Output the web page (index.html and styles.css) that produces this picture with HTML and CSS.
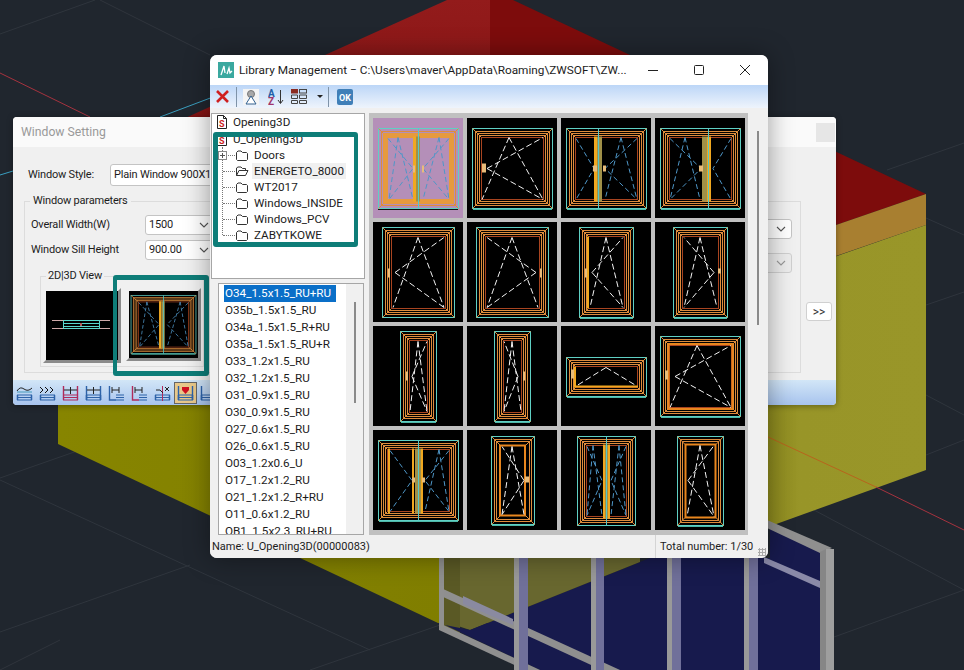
FILE: index.html
```html
<!DOCTYPE html>
<html lang="en">
<head>
<meta charset="utf-8">
<title>Library Management</title>
<link rel="stylesheet" href="styles.css">
</head>
<body>
<svg class="defs" aria-hidden="true">
  <defs>
    <g id="fA"><rect class="cy" x="5.5" y="10" width="80" height="80"/><path class="or" d="M8.5 13H82.5V87H8.5ZM10.5 15H80.5V85H10.5ZM12.5 17H78.5V83H12.5ZM5.5 10L14.5 19M85.5 10L76.5 19M5.5 90L14.5 81M85.5 90L76.5 81"/><rect class="rd" x="14.5" y="19" width="62" height="62"/><path class="cyb" d="M6 91H85"/></g>
    <g id="fB"><rect class="cy" x="9.5" y="5" width="72" height="90"/><path class="or" d="M12.5 8H78.5V92H12.5ZM14.5 10H76.5V90H14.5ZM16.5 12H74.5V88H16.5ZM9.5 5L18.5 14M81.5 5L72.5 14M9.5 95L18.5 86M81.5 95L72.5 86"/><rect class="rd" x="18.5" y="14" width="54" height="72"/></g>
    <g id="fC"><rect class="cy" x="18.5" y="5" width="54" height="90"/><path class="or" d="M21.5 8H69.5V92H21.5ZM23.5 10H67.5V90H23.5ZM25.5 12H65.5V88H25.5ZM18.5 5L27.5 14M72.5 5L63.5 14M18.5 95L27.5 86M72.5 95L63.5 86"/><rect class="rd" x="27.5" y="14" width="36" height="72"/><path class="cyb" d="M19 96H72"/></g>
    <g id="fD"><rect class="cy" x="27.5" y="5" width="36" height="90"/><path class="or" d="M30.5 8H60.5V92H30.5ZM32.5 10H58.5V90H32.5ZM34.5 12H56.5V88H34.5ZM27.5 5L36.5 14M63.5 5L54.5 14M27.5 95L36.5 86M63.5 95L54.5 86"/><rect class="rd" x="36.5" y="14" width="18" height="72"/><path class="cyb" d="M28 96H63"/></g>
    <g id="fE"><rect class="cy" x="5.5" y="31" width="80" height="39"/><path class="or" d="M8.5 34H82.5V67H8.5ZM10.5 36H80.5V65H10.5ZM12.5 38H78.5V63H12.5ZM5.5 31L14.5 40M85.5 31L76.5 40M5.5 70L14.5 61M85.5 70L76.5 61"/><rect class="rd" x="14.5" y="40" width="62" height="21"/><path class="cyb" d="M6 71H85"/></g>
    <g id="fF"><rect class="cy" x="24.5" y="6" width="43" height="88"/><path class="or" d="M27.5 9H64.5V91H27.5ZM29.5 11H62.5V89H29.5ZM24.5 6L33.5 15M67.5 6L58.5 15M24.5 94L33.5 85M67.5 94L58.5 85"/><rect class="ot" x="33" y="15" width="25" height="70"/><path class="cyb" d="M25 95H67"/></g>
    <g id="fG"><rect class="cy" x="16.5" y="6" width="58" height="89"/><path class="or" d="M19.5 9H71.5V92H19.5ZM21.5 11H69.5V90H21.5ZM23.5 13H67.5V88H23.5ZM16.5 6L25.5 15M74.5 6L65.5 15M16.5 95L25.5 86M74.5 95L65.5 86"/><rect class="rd" x="25.5" y="15" width="40" height="71"/></g>
    <g id="fH"><rect class="cy" x="22.5" y="6" width="46" height="89"/><path class="or" d="M25.5 9H65.5V92H25.5ZM27.5 11H63.5V90H27.5ZM22.5 6L30 14M68.5 6L61 14M22.5 95L30 87M68.5 95L61 87"/><rect class="ot" x="30.5" y="14" width="30" height="73"/><path class="cyb" d="M23 96H68"/></g>
    <g id="art1"><use href="#fA"/><rect class="band" x="12.5" y="17" width="66" height="66"/><rect class="amber" x="40" y="18" width="3" height="65"/><rect class="olive" x="43" y="18" width="4" height="65"/><path class="cyl" d="M45.500 10V90"/><path class="bl" d="M25 19L16 81M25 19L40 81M15 20L40 50L16 81M66 19L50 81M66 19L76 81M76 20L50 50L76 81"/><rect class="hd" x="40" y="47" width="2" height="7"/><rect class="hd" x="49" y="47" width="2" height="7"/></g>
    <symbol id="chev" viewBox="0 0 10 6"><path d="M1 1L5 5L9 1" fill="none" stroke="currentColor" stroke-width="1.100"/></symbol>
    <symbol id="folder" viewBox="0 0 14 12"><path d="M1.500 3.500L3 2H6L7.500 3.500H11.500L12.500 4.500V10.500L11.500 11.500H2.500L1.500 10.500Z" fill="#fff" stroke="#333" stroke-width="1"/></symbol>
    <symbol id="folderopen" viewBox="0 0 14 12"><path d="M1.500 10.500V3L3 2H6L7.500 3.500H10.500V5.500M1.500 10.500L4 5.500H13L10.500 10.500Z" fill="#fff" stroke="#333" stroke-width="1"/></symbol>
    <symbol id="doc" viewBox="0 0 12 14"><path d="M1.500 .5H7.500L10.500 3.500V13.500H1.500Z" fill="#fff" stroke="#222"/><path d="M7.500 .5V3.500H10.500" fill="none" stroke="#222"/><text x="3" y="12" class="doc-s">S</text></symbol>
    <symbol id="plan" viewBox="0 0 17 16"><path d="M1 10H16M1 12.500H16M1 15H16" stroke="#2d62a8" stroke-width="1.200" fill="none"/><path d="M1.500 10V15M15.500 10V15" stroke="#2d62a8" stroke-width="1.500"/></symbol>
  </defs>
</svg>

<main class="desktop">
  <svg class="scene" viewBox="0 0 964 670" aria-hidden="true">
    <defs>
      <linearGradient id="yl" x1="0" y1="0" x2="1" y2="0"><stop offset="0" stop-color="#878500"/><stop offset=".75" stop-color="#7f7d00"/><stop offset="1" stop-color="#6a6800"/></linearGradient>
      <linearGradient id="yr" x1="0" y1="0" x2="1" y2="0"><stop offset="0" stop-color="#8d8a1e"/><stop offset=".2" stop-color="#989528"/><stop offset="1" stop-color="#999629"/></linearGradient>
      <linearGradient id="rf" x1="0" y1="0" x2="0" y2="1"><stop offset="0" stop-color="#931b1b"/><stop offset="1" stop-color="#861414"/></linearGradient>
    </defs>
    <path class="grid" d="M0 34L95 0M100 0L210 55M0 478L80 450M0 480L370 650M310 670L440 625M0 632L190 565M887 170L964 143M926 218L964 235M926 305L964 292M926 395L964 415M926 455L964 440M814 510L964 590M834 637L964 590M0 670L60 640"/>
    <path class="red-line" d="M0 73L90 117"/>
    <path class="cyan-line" d="M0 175L13 171M160 117L213 97"/>
    <path fill="url(#yl)" d="M58 380V444L438 623L640 623V380Z"/>
    <path fill="url(#rf)" d="M183 119L447 0H490V120H183Z"/>
    <path fill="#7d0c0c" d="M490 0H513L926 194L836 225V260H490Z"/>
    <path fill="#a87f30" d="M836 225L926 194V225L836 256Z"/>
    <path fill="url(#yr)" d="M768 280L926 225V470L768 527Z"/>
    <path class="orange-line" d="M768 437L876 487"/>
    <path class="red-line" d="M876 487L964 530"/>
    <path fill="#68672f" d="M440 558H640V562L470 630L440 620Z"/>
    <path fill="#5a5925" d="M440 558H460V634L440 625Z"/>
    <path fill="#171a4d" d="M470 630L650 558H770V525L826 549V670H540L445 625Z"/>
    <g class="rails">
      <path fill="#8f8f8f" d="M767 520L832 548L820 553L767 528Z"/>
      <path fill="#8a8aa8" d="M764 557L820 581V588L764 563Z"/>
      <path fill="#8f8f8f" d="M441 588L620 670H602L441 596Z"/>
      <path fill="#8a8aa0" d="M463 596L513 619V625L463 604Z"/>
      <path fill="#8f8f8f" d="M439 623L540 670H525L439 630Z"/>
      <path fill="#909090" d="M439 558H444V627H439Z"/>
      <path fill="#999" d="M514 558H519V670H514Z"/>
      <path fill="#70709a" d="M519 558H528V670H519Z"/>
      <path fill="#999" d="M591 558H596V670H591Z"/>
      <path fill="#70709a" d="M596 558H604V670H596Z"/>
      <path fill="#999" d="M667 558H672V670H667Z"/>
      <path fill="#70709a" d="M672 558H681V670H672Z"/>
      <path fill="#999" d="M744 558H749V670H744Z"/>
      <path fill="#70709a" d="M749 558H758V670H749Z"/>
      <path fill="#868686" d="M820 552L826 549V670H820Z"/>
      <path fill="#9e9e9e" d="M826 549L834 549V670H826Z"/>
    </g>
  </svg>

  <section class="win ws">
    <header class="ws-title"><span>Window Setting</span><span class="ws-close"></span></header>
    <div class="ws-body">
      <div class="style-row">
        <label class="ws-label">Window Style:</label>
        <div class="combo combo-style">Plain Window 900X1500</div>
      </div>
      <div class="group-row">
        <fieldset class="group">
          <legend>Window parameters</legend>
          <div class="group-cols">
            <div class="params">
              <div class="param"><label>Overall Width(W)</label><div class="combo combo-num">1500<svg class="chev"><use href="#chev"/></svg></div></div>
              <div class="param"><label>Window Sill Height</label><div class="combo combo-num">900.00<svg class="chev"><use href="#chev"/></svg></div></div>
              <fieldset class="view-group">
                <legend>2D|3D View</legend>
                <div class="previews">
                  <div class="preview prev-2d">
                    <svg viewBox="0 0 72 69"><path d="M6 29.500H64M6 37.500H64" stroke="#cfa9a9" fill="none"/><path d="M17.500 29.500H53.500V37.500H17.500ZM17.500 32.500H53.500M17.500 35.500H53.500" stroke="#59d6cc" fill="none"/><rect x="34" y="32" width="2" height="3" fill="#b05a5a"/></svg>
                  </div>
                  <div class="preview prev-3d">
                    <svg viewBox="3 4 85 92" preserveAspectRatio="none"><use href="#fA"/><rect class="amber" x="40" y="18" width="3" height="65"/><rect class="olive" x="43" y="18" width="4" height="65"/><path class="cyl" d="M45.500 10V90"/><path class="bl" d="M25 19L16 81M25 19L40 81M15 20L40 50L16 81M66 19L50 81M66 19L76 81M76 20L50 50L76 81"/></svg>
                  </div>
                </div>
              </fieldset>
            </div>
            <div class="right-combos">
              <div class="combo combo-right"><svg class="chev"><use href="#chev"/></svg></div>
              <div class="combo combo-right combo-off"><svg class="chev"><use href="#chev"/></svg></div>
            </div>
          </div>
        </fieldset>
        <button class="more" type="button">&gt;&gt;</button>
      </div>
    </div>
    <div class="ws-tools">
      <span class="tool"><svg viewBox="0 0 17 16"><use href="#plan"/><path d="M1 6Q4 1 8 4T16 3" stroke="#222" fill="none"/><path d="M1 7H16" stroke="#49b" /></svg></span>
      <span class="tool"><svg viewBox="0 0 17 16"><use href="#plan"/><path d="M1 2L4 5L1 8M6 2L9 5L6 8M11 2L14 5L11 8" stroke="#111" fill="none"/></svg></span>
      <span class="tool"><svg viewBox="0 0 17 16"><path d="M1 10H16M1 12.500H16M1 15H16" stroke="#b02a5a" stroke-width="1.200"/><path d="M1.500 1V15M15.500 1V15" stroke="#b02a5a" stroke-width="1.400"/><path d="M2 5H15M8.500 2V9" stroke="#222"/></svg></span>
      <span class="tool"><svg viewBox="0 0 17 16"><use href="#plan"/><path d="M1.500 1V15M15.500 1V15" stroke="#2d62a8" stroke-width="1.400"/><path d="M2 5H15M8.500 2V9" stroke="#222"/></svg></span>
      <span class="tool"><svg viewBox="0 0 17 16"><path d="M8 10H16M8 12.500H16M8 15H16" stroke="#2d62a8" stroke-width="1.200"/><path d="M1.500 1V15H8" stroke="#2d62a8" stroke-width="1.400" fill="none"/><path d="M4 5H11M11 2V8M4 2V8" stroke="#222"/></svg></span>
      <span class="tool"><svg viewBox="0 0 17 16"><path d="M8 10H16M8 12.500H16M8 15H16" stroke="#2d62a8" stroke-width="1.200"/><path d="M1.500 1V15H8" stroke="#b02a5a" stroke-width="1.400" fill="none"/><path d="M4 5H11M11 2V8M4 2V8" stroke="#222"/></svg></span>
      <span class="tool"><svg viewBox="0 0 17 16"><use href="#plan"/><path d="M8.500 1V16" stroke="#b02a5a"/><path d="M2 5H6L9 8M11 2L15 6M15 2L11 6" stroke="#222" fill="none"/></svg></span>
      <span class="tool tool-on"><svg viewBox="0 0 17 16"><use href="#plan"/><path d="M1.500 1V15M15.500 1V15" stroke="#2d62a8" stroke-width="1.400"/><path d="M5 2H12V5L8.500 9L5 5Z" fill="#d01020"/></svg></span>
      <span class="tool"><svg viewBox="0 0 17 16"><use href="#plan"/><path d="M1.500 1V15" stroke="#2d62a8" stroke-width="1.400"/></svg></span>
    </div>
    <div class="callout callout-view"></div>
  </section>

  <section class="win lib">
    <header class="lib-title">
      <svg class="app-icon" viewBox="0 0 16 16"><rect width="16" height="16" fill="#3aa89f"/><path d="M3 13L6 4L7 11M9 12L11 6L12 11L14 9" fill="none" stroke="#fff" stroke-width="1.300"/></svg>
      <span class="lib-caption">Library Management − C:\Users\maver\AppData\Roaming\ZWSOFT\ZW...</span>
      <div class="controls">
        <span class="ctl"><svg viewBox="0 0 10 10"><path d="M0 5.500H10" stroke="#222"/></svg></span>
        <span class="ctl"><svg viewBox="0 0 10 10"><rect x=".5" y=".5" width="9" height="9" rx="1" fill="none" stroke="#222"/></svg></span>
        <span class="ctl"><svg viewBox="0 0 10 10"><path d="M0 0L10 10M10 0L0 10" stroke="#222"/></svg></span>
      </div>
    </header>
    <div class="lib-tools">
      <svg class="lt lt-x" viewBox="0 0 15 15"><path d="M2 2L13 13M13 2L2 13" stroke="#cf1f1f" stroke-width="2.600"/></svg>
      <span class="lt-sep"></span>
      <svg class="lt lt-person" viewBox="0 0 16 16"><rect width="16" height="16" fill="#f4f4f4"/><circle cx="8" cy="5" r="3.500" fill="#a8a8a8" stroke="#777"/><path d="M8 7L3 15H13Z" fill="#fff" stroke="#2f5f8f"/></svg>
      <svg class="lt lt-az" viewBox="0 0 16 16"><text x="0" y="7.500" class="az-a">A</text><text x="0" y="15.500" class="az-z">Z</text><path d="M12.500 1V14M10 11L12.500 14.500L15 11" fill="none" stroke="#333"/></svg>
      <svg class="lt lt-table" viewBox="0 0 16 15"><rect x=".5" y=".5" width="6" height="3.500" fill="#8a2a20" stroke="#8a2a20"/><rect x="8.500" y=".5" width="7" height="3.500" fill="none" stroke="#444"/><path d="M.5 6H6.500V9.500H.5ZM8.500 6H15.500V9.500H8.500ZM.5 11.500H6.500V14.500H.5ZM8.500 11.500H15.500V14.500H8.500Z" fill="none" stroke="#444"/></svg>
      <span class="caret"></span>
      <span class="lt-sep"></span>
      <svg class="lt lt-ok" viewBox="0 0 16 16"><rect width="16" height="16" rx="2" fill="#3f7fb8"/><text x="8" y="11.500" class="ok-text">OK</text></svg>
    </div>
    <div class="lib-main">
      <div class="lib-left">
        <div class="tree">
          <div class="tree-row"><svg class="doc"><use href="#doc"/></svg><span>Opening3D</span></div>
          <div class="tree-row tree-root"><svg class="doc"><use href="#doc"/></svg><span>U_Opening3D</span></div>
          <div class="tree-children">
            <div class="tree-row branch"><span class="plus"></span><svg class="fold"><use href="#folder"/></svg><span>Doors</span></div>
            <div class="tree-row branch"><svg class="fold"><use href="#folderopen"/></svg><span class="tree-on">ENERGETO_8000</span></div>
            <div class="tree-row branch"><svg class="fold"><use href="#folder"/></svg><span>WT2017</span></div>
            <div class="tree-row branch"><svg class="fold"><use href="#folder"/></svg><span>Windows_INSIDE</span></div>
            <div class="tree-row branch"><svg class="fold"><use href="#folder"/></svg><span>Windows_PCV</span></div>
            <div class="tree-row branch"><svg class="fold"><use href="#folder"/></svg><span>ZABYTKOWE</span></div>
          </div>
        </div>
        <div class="list">
          <ul class="list-items">
            <li class="list-on">O34_1.5x1.5_RU+RU</li>
            <li>O35b_1.5x1.5_RU</li>
            <li>O34a_1.5x1.5_R+RU</li>
            <li>O35a_1.5x1.5_RU+R</li>
            <li>O33_1.2x1.5_RU</li>
            <li>O32_1.2x1.5_RU</li>
            <li>O31_0.9x1.5_RU</li>
            <li>O30_0.9x1.5_RU</li>
            <li>O27_0.6x1.5_RU</li>
            <li>O26_0.6x1.5_RU</li>
            <li>O03_1.2x0.6_U</li>
            <li>O17_1.2x1.2_RU</li>
            <li>O21_1.2x1.2_R+RU</li>
            <li>O11_0.6x1.2_RU</li>
            <li>OB1_1.5x2.3_RU+RU</li>
          </ul>
          <div class="vbar"><span class="vthumb vthumb-list"></span></div>
        </div>
      </div>
      <div class="thumbs">
        <svg class="thumb thumb-sel" viewBox="0 -.5 90 100"><use href="#art1"/><path d="M5 91H85" stroke="#111"/></svg>
        <svg class="thumb" viewBox="0 -.5 90 100"><use href="#fA"/><path class="wh" d="M42 19L15 81M42 19L76 81M20 50L76 19M20 50L76 81"/><rect class="hd" x="15" y="45" width="4" height="9"/></svg>
        <svg class="thumb" viewBox="0 -.5 90 100"><use href="#fA"/><rect class="amber" x="33" y="18" width="3" height="65"/><rect class="olive" x="36" y="18" width="5" height="65"/><path class="cyl" d="M37.500 10V90"/><path class="bl" d="M15 20L33 50L15 81M60 19L44 81M60 19L76 81M76 20L44 50L76 81"/><rect class="hd" x="32" y="47" width="4" height="6"/><rect class="hd" x="42" y="47" width="3" height="6"/></svg>
        <svg class="thumb" viewBox="0 -.5 90 100"><use href="#fA"/><rect class="olive" x="47" y="18" width="5" height="65"/><rect class="amber" x="52" y="18" width="4" height="65"/><path class="cyl" d="M53.500 10V90"/><path class="bl" d="M30 19L15 81M30 19L45 81M15 20L46 50L15 81M76 20L58 50L76 81"/><rect class="hd" x="44" y="47" width="4" height="6"/></svg>

        <svg class="thumb" viewBox="0 -.5 90 100"><use href="#fB"/><path class="wh" d="M45 15L20 85M45 15L71 85M22 50L71 15M22 50L71 85"/><rect class="hd" x="15" y="46" width="2" height="9"/></svg>
        <svg class="thumb" viewBox="0 -.5 90 100"><use href="#fB"/><path class="wh" d="M45 15L20 85M45 15L71 85M69 50L20 15M69 50L20 85"/><rect class="hd" x="73" y="46" width="2" height="9"/></svg>
        <svg class="thumb" viewBox="0 -.5 90 100"><use href="#fC"/><rect class="amber" x="26" y="14" width="2" height="72"/><path class="wh" d="M45 15L29 85M45 15L62 85M31 50L62 15M31 50L62 85"/><rect class="hd" x="24" y="46" width="2" height="9"/></svg>
        <svg class="thumb" viewBox="0 -.5 90 100"><use href="#fC"/><path class="wh" d="M45 15L29 85M45 15L62 85M59 50L29 15M59 50L29 85"/><rect class="hd" x="63" y="46" width="3" height="5"/></svg>

        <svg class="thumb" viewBox="0 -.5 90 100"><use href="#fD"/><path class="wh" d="M45 15L37 85M45 15L54 85M39 50L54 15M39 50L54 85"/><rect class="hd" x="33" y="45" width="2" height="9"/></svg>
        <svg class="thumb" viewBox="0 -.5 90 100"><use href="#fD"/><path class="wh" d="M45 15L37 85M45 15L54 85M51 50L37 15M51 50L37 85"/><rect class="hd" x="56" y="45" width="2" height="9"/></svg>
        <svg class="thumb" viewBox="0 -.5 90 100"><use href="#fE"/><rect class="amber" x="13" y="59" width="64" height="2"/><rect class="amber" x="13" y="40" width="2" height="21"/><path class="wh" d="M45 41L16 59M45 41L75 59"/><rect class="hd" x="10" y="43" width="3" height="9"/></svg>
        <svg class="thumb" viewBox="0 -.5 90 100"><use href="#fA"/><rect class="ot" x="13.500" y="17.500" width="64" height="65"/><path class="wh" d="M42 19L15 81M42 19L76 81M20 50L76 19M20 50L76 81"/><rect class="hd" x="10" y="44" width="3" height="9"/></svg>

        <svg class="thumb" viewBox="0 -.5 90 100"><use href="#fA"/><rect class="amber" x="39" y="18" width="2" height="65"/><rect class="olive" x="42" y="18" width="6" height="65"/><rect class="amber" x="48" y="18" width="2" height="65"/><path class="cyl" d="M45.500 10V90"/><rect class="amber" x="15" y="18" width="2" height="65"/><path class="bl" d="M17 20L39 50L17 81M66 19L52 81M66 19L76 81M76 20L52 50L76 81"/><rect class="hd" x="39" y="47" width="3" height="5"/><rect class="hd" x="49" y="47" width="3" height="5"/></svg>
        <svg class="thumb" viewBox="0 -.5 90 100"><use href="#fF"/><path class="wh" d="M45 16L35 84M45 16L57 84M57 50L35 16M57 50L35 84"/><rect class="hd" x="58" y="46" width="4" height="6"/></svg>
        <svg class="thumb" viewBox="0 -.5 90 100"><use href="#fG"/><rect class="amber" x="42" y="14" width="2" height="74"/><rect class="olive" x="44" y="14" width="3" height="74"/><rect class="amber" x="47" y="14" width="2" height="74"/><path class="cyl" d="M45.500 6V95"/><path class="bl" d="M32 15L26 85M32 15L41 85M26 16L41 50L26 85M58 15L50 85M58 15L65 85M65 16L50 50L65 85"/></svg>
        <svg class="thumb" viewBox="0 -.5 90 100"><use href="#fH"/><path class="wh" d="M45 15L32 86M45 15L59 86M33 50L59 15M33 50L59 86"/></svg>
      </div>
      <div class="vbar vbar-main"><span class="vthumb vthumb-main"></span></div>
    </div>
    <footer class="lib-status">
      <span class="status-name">Name: U_Opening3D(00000083)</span>
      <span class="status-total">Total number: 1/30</span>
      <span class="grip"></span>
    </footer>
    <div class="callout callout-tree"></div>
  </section>
</main>
</body>
</html>
```

FILE: styles.css
```css
* { box-sizing: border-box; }
html, body { margin: 0; height: 100%; }
body {
  background: #20262e;
  font: 12px/16px Roboto, "Liberation Sans", sans-serif;
  color: #1c1c1c;
  overflow: hidden;
}
.defs { position: absolute; width: 0; height: 0; }
.desktop { position: relative; width: 964px; height: 670px; overflow: hidden; }
.scene { position: absolute; inset: 0; width: 964px; height: 670px; }
.grid { stroke: #2f353d; fill: none; }
.red-line { stroke: #a5333f; fill: none; }
.cyan-line { stroke: #3a9fc0; fill: none; }
.orange-line { stroke: #b8641c; fill: none; }

.win { position: absolute; display: flex; flex-direction: column; }

/* Window Setting */
.ws {
  left: 13px; top: 117px; width: 823px; height: 288px;
  background: #f0f0f0;
  border-radius: 4px;
  overflow: hidden;
  box-shadow: 0 1px 6px rgba(0, 0, 0, .35);
}
.ws-title {
  height: 30px; flex: none;
  display: flex; align-items: center; justify-content: space-between;
  padding: 0 1px 0 8px;
  background: #fafafa;
  color: #999;
  font-size: 12.2px;
}
.ws-close { width: 19px; height: 19px; background: #e6e6e6; }
.ws-body { flex: 1; padding: 17px 0 0 15px; font-size: 11px; letter-spacing: -.2px; }
.style-row { display: flex; align-items: center; height: 22px; }
.ws-label { width: 82px; flex: none; }
.combo {
  position: relative;
  background: #fff;
  border: 1px solid #c4c4c4;
  border-radius: 3px;
  padding-left: 3px;
  display: flex; align-items: center;
}
.combo-style { width: 200px; height: 22px; }
.chev { position: absolute; right: 5px; top: 6px; width: 10px; height: 6px; color: #555; }
.group-row { display: flex; margin: 8px 0 0 -4px; }
.group {
  width: 777px; height: 179px;
  margin: 0; padding: 7px 0 0 6px; min-width: 0;
  border: 1px solid #dcdcdc;
}
.group legend { margin-left: -1px; padding: 0 3px; line-height: 14px; }
.group-cols { display: flex; justify-content: space-between; }
.params { width: 190px; }
.param { display: flex; align-items: center; height: 20px; margin-bottom: 5px; }
.param label { width: 114px; flex: none; }
.combo-num { width: 70px; height: 20px; flex: none; }
.view-group {
  margin: 9px 0 0 9px; padding: 0 0 0 2px; min-width: 0;
  width: 164px; height: 98px;
  border: 1px solid #dcdcdc;
}
.view-group legend { margin-left: 3px; padding: 0 2px; line-height: 14px; }
.previews { display: flex; gap: 5px; padding-top: 5px; }
.preview {
  flex: none; background: #000;
  border: 3px solid #f0f0f0;
  border-right-color: #8a8a8a; border-bottom-color: #8a8a8a;
}
.preview svg { display: block; width: 100%; height: 100%; }
.prev-2d { width: 78px; height: 75px; }
.prev-3d { width: 75px; height: 73px; }
.right-combos { display: flex; flex-direction: column; gap: 14px; margin: 4px 8px 0 0; }
.combo-right { width: 100px; height: 20px; }
.combo-off { background: #ececec; border-color: #cfcfcf; }
.combo-off .chev { color: #999; }
.more {
  align-self: flex-start;
  margin: 108px 0 0 5px; padding: 0;
  width: 26px; height: 19px;
  background: #fff;
  border: 1px solid #d0d0d0; border-radius: 3px;
  font: 12px/16px Roboto, sans-serif; color: #333;
}
.ws-tools {
  height: 25px; flex: none;
  display: flex; align-items: center;
  background: linear-gradient(#d2e6f7, #a8c4ee);
}
.tool { width: 23px; height: 22px; flex: none; display: flex; align-items: center; justify-content: center; }
.tool svg { width: 17px; height: 16px; }
.tool-on { background: #e8c88a; outline: 1px solid #666; outline-offset: -1px; }
.callout {
  position: absolute;
  border: 4px solid #0e7d78;
  border-radius: 3px;
}
.callout-view { left: 100px; top: 158px; width: 96px; height: 101px; border-width: 5px 5px 5px 4px; }
.callout-tree { left: 3px; top: 77px; width: 145px; height: 115px; border-width: 5px 4px 5px 5px; }

/* Library */
.lib {
  left: 210px; top: 55px; width: 558px; height: 503px;
  background: #f0f0f0;
  border-radius: 7px;
  overflow: hidden;
  box-shadow: 0 0 26px rgba(0, 0, 0, .38);
}
.lib-title {
  height: 30px; flex: none;
  display: flex; align-items: center;
  padding-left: 8px;
  background: #fff;
  font-size: 11.8px;
}
.app-icon { width: 16px; height: 16px; flex: none; margin-right: 5px; }
.lib-caption { white-space: nowrap; flex: none; }
.controls { display: flex; flex: none; margin-left: auto; }
.ctl { width: 46px; height: 30px; display: flex; align-items: center; justify-content: center; }
.ctl svg { width: 10px; height: 10px; }
.lib-tools {
  height: 23px; flex: none;
  display: flex; align-items: center;
  padding-left: 4px;
  background: linear-gradient(#bcd6f7, #eef4fc);
}
.lt { flex: none; width: 15px; height: 15px; }
.lt-sep { width: 1px; height: 20px; background: #7f93a8; flex: none; }
.lt-x { margin: 0 6px 0 1px; }
.lt-person { width: 16px; height: 16px; margin: 0 9px 0 6px; }
.lt-az { width: 16px; height: 16px; margin-right: 7px; }
.lt-table { width: 16px; height: 15px; }
.caret { width: 0; height: 0; margin: 0 5px 0 10px; border: 3px solid transparent; border-top-color: #222; border-bottom: 0; }
.lt-ok { width: 16px; height: 16px; margin-left: 8px; }
.az-a { font: bold 10px Roboto, sans-serif; fill: #1f5fa8; }
.az-z { font: bold 10px Roboto, sans-serif; fill: #a0356a; }
.ok-text { font: bold 9px Roboto, sans-serif; fill: #fff; text-anchor: middle; }
.doc-s { font: bold 9px Roboto, sans-serif; fill: #c22; }

.lib-main { flex: 1; display: flex; min-height: 0; font-size: 11.7px; }
.lib-left { width: 154px; flex: none; margin-left: 1px; padding-top: 5px; display: flex; flex-direction: column; }
.tree {
  height: 166px; flex: none;
  background: #fff;
  border: 1px solid #a6a6a6;
  overflow: hidden;
}
.tree-row { height: 16px; display: flex; align-items: center; padding-left: 2px; white-space: nowrap; }
.tree-row > span:last-child { margin-left: 3px; padding: 0 2px; }
.tree-root { margin-top: 1px; }
.doc { width: 12px; height: 14px; margin-left: 2px; flex: none; }
.tree-children { margin-left: 10px; border-left: 1px dotted #777; height: 88px; }
.branch { position: relative; padding-left: 12px; }
.branch::before {
  content: ""; position: absolute; left: 0; top: 8px; width: 12px;
  border-top: 1px dotted #777;
}
.fold { width: 14px; height: 12px; flex: none; }
.plus {
  position: absolute; left: -5px; top: 4px; width: 9px; height: 9px;
  background: linear-gradient(#555, #555) center / 5px 1px no-repeat,
              linear-gradient(#555, #555) center / 1px 5px no-repeat, #fff;
  border: 1px solid #888;
  z-index: 1;
}
.tree-on { background: #f0f0f0; }
.list {
  flex: 1; min-height: 0;
  margin: 4px 0 0 7px; width: 146px;
  background: #fff;
  border: 1px solid #a6a6a6;
  display: flex;
  overflow: hidden;
}
.list-items { list-style: none; margin: 0; padding: 1px 0 0 5px; flex: 1; min-width: 0; white-space: nowrap; }
.list-items li { height: 17px; line-height: 17px; padding-left: 1px; width: 112px; }
.list-on { background: #0a6fc8; color: #fff; }
.vbar { width: 17px; flex: none; background: #f0f0f0; position: relative; }
.vthumb { position: absolute; display: block; width: 2px; background: #8a8a8a; }
.vthumb-list { left: 8px; top: 18px; height: 101px; }
.thumbs {
  margin: 5px 0 0 4px; padding: 5px 0 0 4px;
  width: 379px; flex: none;
  background: #c0c0c0;
  display: grid; grid-template-columns: repeat(4, 90px); grid-auto-rows: 100px; gap: 4px;
  overflow: hidden;
}
.vbar-main { width: 20px; }
.vthumb-main { left: 9px; top: 23px; height: 194px; }
.thumb { display: block; width: 90px; height: 100px; background: #000; }
.thumb-sel { background: #b48fb8; }
.cy, .or, .rd, .ot, .band, .cyl, .cyb, .wh, .bl { fill: none; }
.cy { stroke: #5fd0c4; }
.cyb { stroke: #4fb8a8; }
.cyl { stroke: #55c8c8; }
.or { stroke: #de8c3c; }
.rd { stroke: #a84420; }
.ot { stroke: #e8861e; stroke-width: 2; }
.band { stroke: #e69a3e; stroke-width: 5; }
.amber { fill: #f0a820; }
.olive { fill: #a09048; }
.hd { fill: #e8bc7a; }
.wh { stroke: #f4f4f4; stroke-dasharray: 6 3; }
.bl { stroke: #4f97c8; stroke-dasharray: 5 3; }

.lib-status {
  height: 23px; flex: none;
  display: flex; align-items: center;
  position: relative;
  background: #f0f0f0;
  font-size: 11px;
}
.status-name { width: 445px; padding-left: 2px; flex: none; white-space: nowrap; }
.status-total { padding-left: 4px; border-left: 1px solid #d4d4d4; height: 23px; line-height: 23px; white-space: nowrap; }
.grip {
  position: absolute; right: 2px; bottom: 2px; width: 8px; height: 8px;
  background: radial-gradient(circle, #aaa 1px, transparent 1.300px) 0 0 / 3px 3px;
}
```
